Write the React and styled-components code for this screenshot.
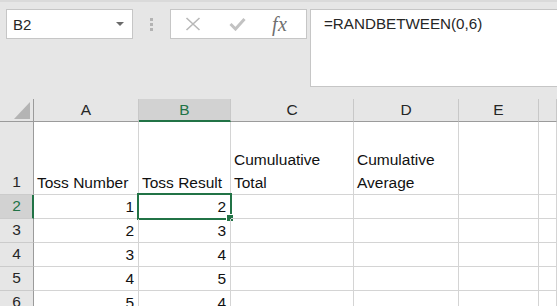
import React from "react";
import styled, { createGlobalStyle } from "styled-components";

const Global = createGlobalStyle`
  html, body {
    margin: 0;
    padding: 0;
    overflow: hidden;
    background: #e6e6e6;
  }
  * {
    box-sizing: border-box;
  }
`;

const GREEN = "#217346";

const Window = styled.div`
  width: 557px;
  height: 306px;
  overflow: hidden;
  background: #e6e6e6;
  font-family: "Liberation Sans", Arial, sans-serif;
  color: #1f1f1f;
`;

const TopBar = styled.div`
  height: 99px;
  display: flex;
  align-items: flex-start;
  padding: 9px 0 0 6px;
  border-top: 2px solid #dadada;
`;

const NameBox = styled.div`
  width: 127px;
  height: 30px;
  margin-top: -2px;
  background: #fff;
  border: 1px solid #c6c6c6;
  display: flex;
  align-items: center;
  justify-content: space-between;
  padding: 0 8px 0 6px;
  font-size: 15px;
  color: #262626;
`;

const Arrow = styled.span`
  width: 0;
  height: 0;
  border-left: 4px solid transparent;
  border-right: 4px solid transparent;
  border-top: 4px solid #6a6a6a;
`;

const Grip = styled.div`
  width: 37px;
  height: 30px;
  margin-top: -2px;
  display: flex;
  flex-direction: column;
  align-items: center;
  justify-content: center;
  gap: 2px;
  span {
    width: 3px;
    height: 3px;
    background: #b3b3b3;
  }
`;

const Buttons = styled.div`
  width: 137px;
  height: 30px;
  margin-top: -2px;
  background: #fff;
  border: 1px solid #c6c6c6;
  display: flex;
  align-items: center;
  padding-left: 14px;
  gap: 28px;
`;

const Fx = styled.span`
  font-family: "Liberation Serif", "Times New Roman", serif;
  font-style: italic;
  font-size: 20px;
  color: #6f6f6f;
  margin-left: -2px;
  letter-spacing: 0.5px;
`;

const FormulaBox = styled.div`
  flex: 1;
  height: 78px;
  margin-top: -2px;
  margin-left: 3px;
  margin-right: -2px;
  background: #fff;
  border: 1px solid #c6c6c6;
  padding: 5px 0 0 13px;
  font-size: 15.2px;
  color: #262626;
`;

const Sheet = styled.div`
  display: grid;
  grid-template-columns: 34px 105px 92px 123px 105px 80px 1fr;
  grid-template-rows: 23px 73px repeat(6, 24px);
  background: #fff;
`;

const Corner = styled.div`
  background: #e6e6e6;
  border-right: 1px solid #9b9b9b;
  border-bottom: 1px solid #9b9b9b;
  position: relative;
  &::after {
    content: "";
    position: absolute;
    right: 3px;
    bottom: 2px;
    width: 0;
    height: 0;
    border-left: 16px solid transparent;
    border-bottom: 17px solid #b4b4b4;
  }
`;

const ColHead = styled.div`
  background: ${(p) => (p.$active ? "#d2d2d2" : "#e6e6e6")};
  color: ${(p) => (p.$active ? GREEN : "#262626")};
  border-right: 1px solid #c8c8c8;
  border-bottom: ${(p) => (p.$active ? `2px solid ${GREEN}` : "1px solid #9b9b9b")};
  font-family: "Liberation Sans", Arial, sans-serif;
  font-size: 15.5px;
  display: flex;
  align-items: center;
  justify-content: center;
  padding-top: ${(p) => (p.$active ? "1px" : "0")};
`;

const RowHead = styled.div`
  background: ${(p) => (p.$active ? "#d2d2d2" : "#e6e6e6")};
  color: ${(p) => (p.$active ? GREEN : "#262626")};
  border-right: ${(p) => (p.$active ? `2px solid ${GREEN}` : "1px solid #9b9b9b")};
  border-bottom: 1px solid #cbcbcb;
  font-size: 15.5px;
  display: flex;
  align-items: flex-end;
  justify-content: center;
  padding-bottom: 3px;
  padding-left: ${(p) => (p.$active ? "1px" : "0")};
`;

const Cell = styled.div`
  position: relative;
  border-right: 1px solid #d4d4d4;
  border-bottom: 1px solid #d4d4d4;
  font-size: 15.5px;
  line-height: 23px;
  color: #111;
  display: flex;
  flex-direction: column;
  justify-content: flex-end;
  align-items: ${(p) => (p.$num ? "flex-end" : "flex-start")};
  padding: 0 4px 0 3px;
  white-space: nowrap;
`;

const Selection = styled.div`
  position: absolute;
  left: -2px;
  top: -2px;
  right: -2px;
  bottom: -2px;
  border: 2px solid ${GREEN};
  pointer-events: none;
  &::after {
    content: "";
    position: absolute;
    right: -4px;
    bottom: -4px;
    width: 6px;
    height: 6px;
    background: ${GREEN};
    border: 1px solid #fff;
  }
`;

const columns = ["A", "B", "C", "D", "E", ""];

const rows = [
  [1, 2],
  [2, 3],
  [3, 4],
  [4, 5],
  [5, 4],
];

const CrossIcon = () => (
  <svg width="16" height="14" viewBox="0 0 16 14">
    <path d="M1.5 1 L14.5 13 M14.5 1 L1.5 13" stroke="#b8b8b8" strokeWidth="1.6" fill="none" />
  </svg>
);

const CheckIcon = () => (
  <svg width="17" height="14" viewBox="0 0 17 14">
    <path d="M1.5 7 L6.5 12 L15.5 2" stroke="#c2c2c2" strokeWidth="3" fill="none" />
  </svg>
);

const App = () => {
  return (
    <Window>
      <Global />
      <TopBar>
        <NameBox>
          <span>B2</span>
          <Arrow />
        </NameBox>
        <Grip>
          <span />
          <span />
          <span />
        </Grip>
        <Buttons>
          <CrossIcon />
          <CheckIcon />
          <Fx>fx</Fx>
        </Buttons>
        <FormulaBox>=RANDBETWEEN(0,6)</FormulaBox>
      </TopBar>
      <Sheet>
        <Corner />
        {columns.map((c, i) => (
          <ColHead key={i} $active={c === "B"}>
            {c}
          </ColHead>
        ))}

        <RowHead>1</RowHead>
        <Cell>Toss Number</Cell>
        <Cell>Toss Result</Cell>
        <Cell>
          <span>Cumuluative</span>
          <span>Total</span>
        </Cell>
        <Cell>
          <span>Cumulative</span>
          <span>Average</span>
        </Cell>
        <Cell />
        <Cell />

        {rows.map((r, i) => (
          <React.Fragment key={i}>
            <RowHead $active={i === 0}>{i + 2}</RowHead>
            <Cell $num>{r[0]}</Cell>
            <Cell $num>
              {r[1]}
              {i === 0 && <Selection />}
            </Cell>
            <Cell />
            <Cell />
            <Cell />
            <Cell />
          </React.Fragment>
        ))}
      </Sheet>
    </Window>
  );
};

export default App;
